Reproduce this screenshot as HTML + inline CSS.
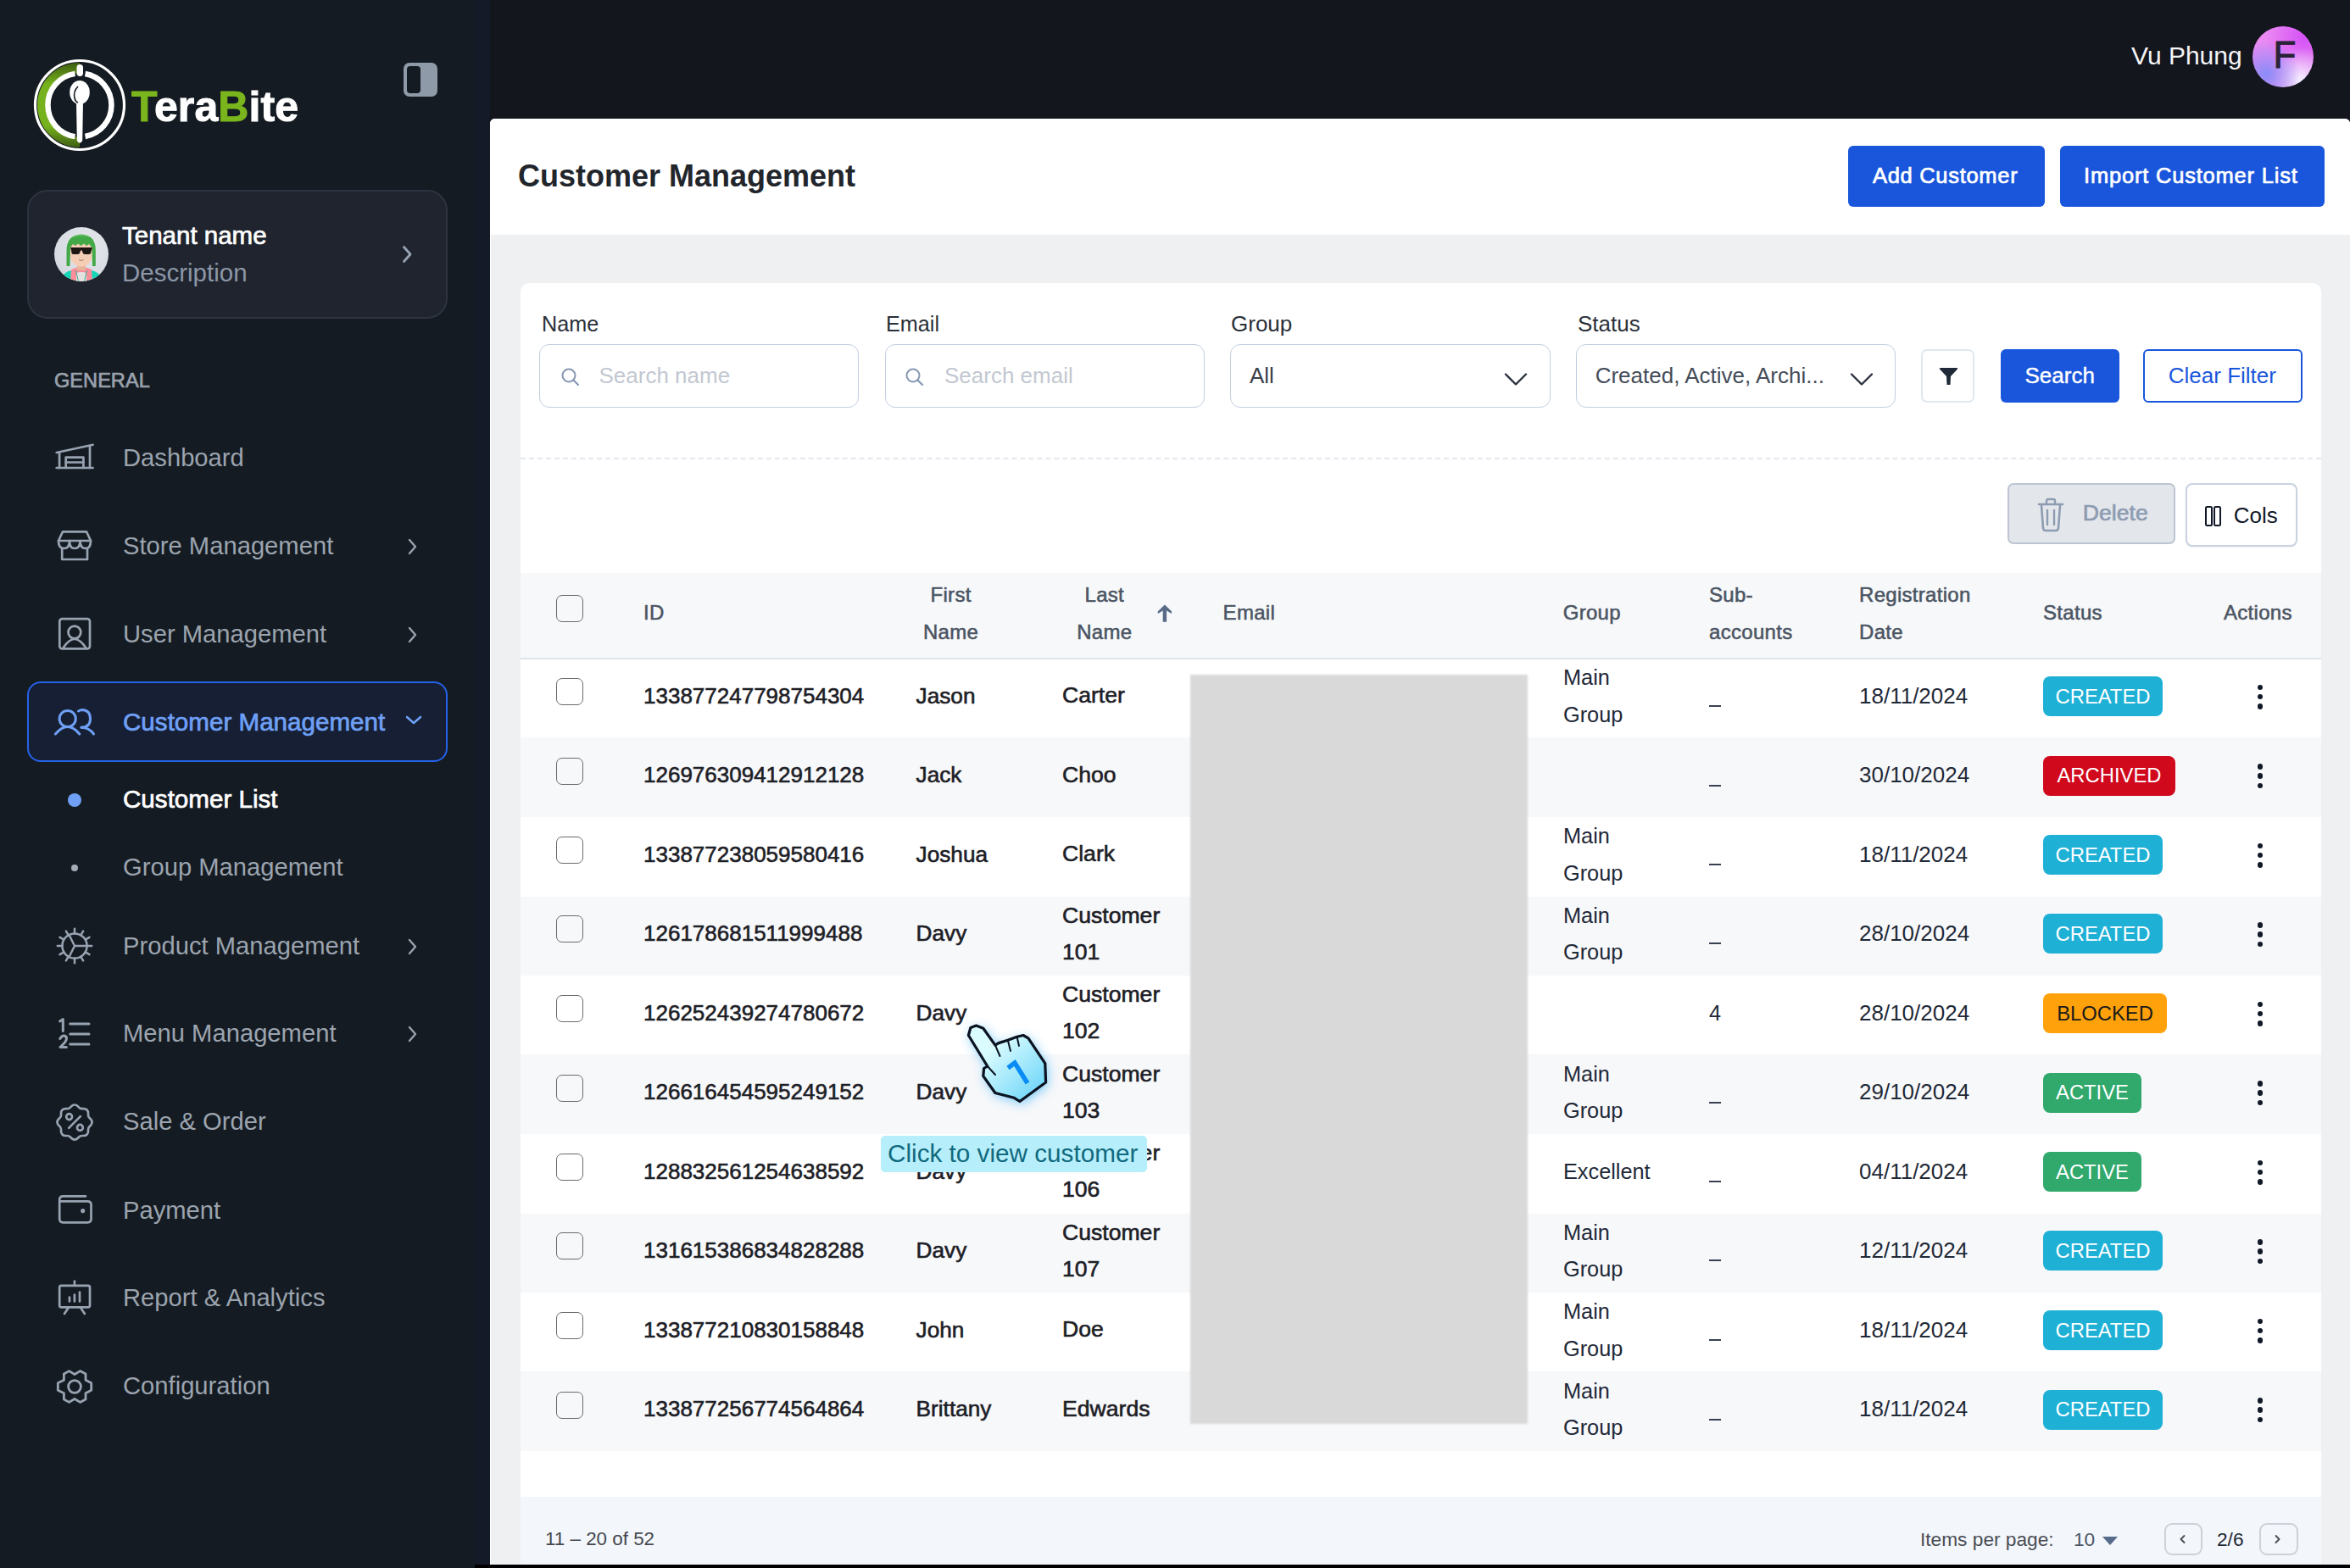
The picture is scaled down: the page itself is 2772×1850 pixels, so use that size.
<!DOCTYPE html><html><head><meta charset="utf-8"><style>
html,body{margin:0;padding:0;width:2772px;height:1850px;overflow:hidden;background:#14161e;font-family:"Liberation Sans", sans-serif;}
.t{position:absolute;white-space:nowrap;font-family:"Liberation Sans", sans-serif;}
</style></head><body><div style="position:absolute;left:0px;top:0px;width:560px;height:1850px;background:#151b22"></div>
<div style="position:absolute;left:560px;top:0px;width:18px;height:1850px;background:#151a28"></div>
<div style="position:absolute;left:578px;top:0px;width:2194px;height:140px;background:#14161e"></div>
<div style="position:absolute;left:578px;top:140px;width:2194px;height:1706px;background:#eff0f2;border-top-left-radius:6px;border-top-right-radius:6px;box-shadow:inset 1px 0 0 #fff;"></div>
<div style="position:absolute;left:578px;top:140px;width:2194px;height:137px;background:#ffffff;border-top-left-radius:6px;border-top-right-radius:6px;"></div>
<div style="position:absolute;left:614px;top:334px;width:2124px;height:1512px;background:#ffffff;border-top-left-radius:10px;border-top-right-radius:10px;"></div>
<div style="position:absolute;left:614px;top:1766px;width:2124px;height:80px;background:#f3f6fa"></div>
<div style="position:absolute;left:560px;top:1846px;width:2212px;height:4px;background:#000"></div>
<svg style="position:absolute;left:36px;top:66px" width="116" height="116" viewBox="0 0 116 116" fill="none">
<defs><linearGradient id="gg" x1="0" y1="0" x2="0" y2="1"><stop offset="0" stop-color="#3f5e12"/><stop offset="0.25" stop-color="#76b11e"/><stop offset="0.75" stop-color="#76b11e"/><stop offset="1" stop-color="#3f5e12"/></linearGradient></defs>
<circle cx="58" cy="58" r="52.5" stroke="#fff" stroke-width="3.2"/>
<path d="M58 8 A50 50 0 0 0 58 108 L58 96 A38 38 0 0 1 58 20 Z" fill="url(#gg)"/>
<path d="M52.5 20.9 A37.5 37.5 0 0 0 52.5 95.1" stroke="#fff" stroke-width="6.5"/>
<path d="M64.5 21.07 A37.5 37.5 0 0 1 64.5 94.93" stroke="#fff" stroke-width="6.5"/>
<rect x="54.5" y="10" width="7.5" height="14" rx="3.7" fill="#fff"/>
<ellipse cx="58" cy="43" rx="11.8" ry="14" fill="#fff"/>
<path d="M54 54 L54.8 100 Q58 105.5 61.2 100 L62 54 Z" fill="#fff"/>
<path d="M56 36 Q50 42 52 50 Q53 54 56 55" stroke="#151b22" stroke-width="1.6"/>
</svg>
<div class="t" style="left:155px;top:100.5px;font-size:50px;line-height:50px;color:#fff;font-weight:700;letter-spacing:0.1px;-webkit-text-stroke:1px #fff;"><span style="color:#7ab51d;-webkit-text-stroke:1px #7ab51d">T</span>era<span style="color:#7ab51d;-webkit-text-stroke:1px #7ab51d">B</span>ite</div>
<div style="position:absolute;left:476px;top:74px;width:40px;height:40px;box-sizing:border-box;background:#8f9aa8;border-radius:7px;"></div>
<div style="position:absolute;left:480px;top:78px;width:16px;height:32px;background:#151b22;border-radius:4px;"></div>
<div style="position:absolute;left:32px;top:224px;width:496px;height:152px;box-sizing:border-box;background:#1f242f;border:2px solid #2e343f;border-radius:24px;"></div>
<div style="position:absolute;left:64px;top:268px;width:64px;height:64px;border-radius:50%;background:radial-gradient(circle at 60% 35%, #e4e7ec 0%, #d9dde3 60%, #c9ced6 100%);overflow:hidden">
<svg width="64" height="64" viewBox="0 0 64 64">
<path d="M6 64 Q10 53 20 51 L44 51 Q54 53 58 64 Z" fill="#12d8b8"/>
<path d="M19 64 L20 50 Q26 47 32 47 Q38 47 44 50 L45 64 Z" fill="#fb8d9a"/>
<path d="M26 64 L26 54 Q32 52 38 54 L38 64 Z" fill="#e6e2e2"/>
<path d="M25.5 51 L28.5 64 M38.5 51 L35.5 64" stroke="#2fae8e" stroke-width="1"/>
<rect x="27" y="42" width="10" height="9" fill="#e8b49c"/>
<ellipse cx="31.8" cy="32.5" rx="13" ry="14" fill="#f5cdb5"/><rect x="18.5" y="18" width="26.5" height="12" fill="#f5cdb5"/>
<path d="M14.5 46 L14.5 28 Q14.5 9 32 8.5 Q49 9 48.8 28 L48.8 46 L45 46 L44.5 24 L41 20 L38 22 L35 19.5 L31.5 22 L28 19.5 L25 22 L22 20 L19 24 L18.5 46 Z" fill="#43a947"/>
<path d="M20 12.5 Q32 6 44 12.5 Q38 10 32 10 Q26 10 20 12.5 Z" fill="#7fcf72"/>
<path d="M19 24 L45 24 L44 27 L43 31 Q42.5 32 40.5 32 L36 32 Q34 32 33.5 30 L32.8 27.5 L31 27.5 L30.3 30 Q29.8 32 27.8 32 L23 32 Q21 32 20.6 31 L20 27 Z" fill="#1d1612"/>
<path d="M29 38.5 Q31.8 40.5 34.6 38.5" stroke="#8a6f66" stroke-width="0.9" fill="none"/>
</svg></div>
<div class="t" style="left:144px;top:262.9px;font-size:29.5px;line-height:29.5px;color:#ffffff;font-weight:400;-webkit-text-stroke:0.7px #ffffff;">Tenant name</div>
<div class="t" style="left:144px;top:306.9px;font-size:29.5px;line-height:29.5px;color:#8d97a6;font-weight:400;">Description</div>
<svg style="position:absolute;left:472px;top:288px" width="16" height="24" viewBox="0 0 16 24" fill="none"><path d="M4.5 3.5 L12 12 L4.5 20.5" stroke="#98a3b2" stroke-width="2.8" stroke-linecap="round" stroke-linejoin="round"/></svg>
<div class="t" style="left:64px;top:437.9px;font-size:23.6px;line-height:23.6px;color:#9aa2ad;font-weight:400;-webkit-text-stroke:0.7px #9aa2ad;">GENERAL</div>
<div class="t" style="left:145px;top:526.2px;font-size:29.2px;line-height:29.2px;color:#9ba4af;font-weight:400;">Dashboard</div>
<div class="t" style="left:145px;top:629.7px;font-size:29.2px;line-height:29.2px;color:#9ba4af;font-weight:400;">Store Management</div>
<svg style="position:absolute;left:478px;top:632.5px" width="16" height="24" viewBox="0 0 16 24" fill="none"><path d="M5 4 L12 12 L5 20" stroke="#9aa2ad" stroke-width="2.4" stroke-linecap="round" stroke-linejoin="round"/></svg>
<div class="t" style="left:145px;top:733.7px;font-size:29.2px;line-height:29.2px;color:#9ba4af;font-weight:400;">User Management</div>
<svg style="position:absolute;left:478px;top:736.5px" width="16" height="24" viewBox="0 0 16 24" fill="none"><path d="M5 4 L12 12 L5 20" stroke="#9aa2ad" stroke-width="2.4" stroke-linecap="round" stroke-linejoin="round"/></svg>
<div class="t" style="left:145px;top:1101.7px;font-size:29.2px;line-height:29.2px;color:#9ba4af;font-weight:400;">Product Management</div>
<svg style="position:absolute;left:478px;top:1104.5px" width="16" height="24" viewBox="0 0 16 24" fill="none"><path d="M5 4 L12 12 L5 20" stroke="#9aa2ad" stroke-width="2.4" stroke-linecap="round" stroke-linejoin="round"/></svg>
<div class="t" style="left:145px;top:1205.2px;font-size:29.2px;line-height:29.2px;color:#9ba4af;font-weight:400;">Menu Management</div>
<svg style="position:absolute;left:478px;top:1208px" width="16" height="24" viewBox="0 0 16 24" fill="none"><path d="M5 4 L12 12 L5 20" stroke="#9aa2ad" stroke-width="2.4" stroke-linecap="round" stroke-linejoin="round"/></svg>
<div class="t" style="left:145px;top:1309.2px;font-size:29.2px;line-height:29.2px;color:#9ba4af;font-weight:400;">Sale &amp; Order</div>
<div class="t" style="left:145px;top:1414.2px;font-size:29.2px;line-height:29.2px;color:#9ba4af;font-weight:400;">Payment</div>
<div class="t" style="left:145px;top:1517.2px;font-size:29.2px;line-height:29.2px;color:#9ba4af;font-weight:400;">Report &amp; Analytics</div>
<div class="t" style="left:145px;top:1621.2px;font-size:29.2px;line-height:29.2px;color:#9ba4af;font-weight:400;">Configuration</div>
<div style="position:absolute;left:32px;top:804px;width:496px;height:95px;box-sizing:border-box;background:#161f33;border:2.5px solid #2563eb;border-radius:16px;"></div>
<div class="t" style="left:145px;top:836.8px;font-size:29.6px;line-height:29.6px;color:#6fa0f6;font-weight:400;-webkit-text-stroke:0.7px #6fa0f6;">Customer Management</div>
<svg style="position:absolute;left:476px;top:842px" width="24" height="16" viewBox="0 0 24 16" fill="none"><path d="M4 4 L12 11 L20 4" stroke="#6fa0f6" stroke-width="2.6" stroke-linecap="round" stroke-linejoin="round"/></svg>
<div style="position:absolute;left:80px;top:936px;width:16px;height:16px;background:#6fa0f6;border-radius:50%"></div>
<div class="t" style="left:145px;top:928.4px;font-size:29.6px;line-height:29.6px;color:#ffffff;font-weight:400;-webkit-text-stroke:0.7px #ffffff;">Customer List</div>
<div style="position:absolute;left:84px;top:1020px;width:8px;height:8px;background:#a3abb6;border-radius:50%"></div>
<div class="t" style="left:145px;top:1009.2px;font-size:29.2px;line-height:29.2px;color:#9ba4af;font-weight:400;">Group Management</div>
<div class="t" style="left:2514px;top:50.5px;font-size:30px;line-height:30px;color:#f4f4f6;font-weight:400;">Vu Phung</div>
<div style="position:absolute;left:2657px;top:31px;width:72px;height:72px;border-radius:50%;background:radial-gradient(circle at 22% 78%, #8a8cf8 0%, rgba(138,140,248,0) 50%), radial-gradient(circle at 78% 88%, #f2efff 0%, rgba(242,239,255,0) 45%), radial-gradient(circle at 85% 18%, #d552f7 0%, rgba(213,82,247,0) 55%), #ec8af2;"></div>
<div class="t" style="left:2195px;width:1000px;text-align:center;top:42.6px;font-size:44px;line-height:44px;color:#2a2236;font-weight:400;-webkit-text-stroke:0.9px #2a2236;">F</div>
<svg style="position:absolute;left:0;top:0" width="560" height="1850" viewBox="0 0 560 1850" fill="none" stroke="#98a3b2" stroke-width="2.7" stroke-linecap="round" stroke-linejoin="round"><path d="M66.7 534 L109.6 524.8"/><path d="M70.1 534 L70.1 552 M106 527 L106 552"/><path d="M66.7 552 L109.6 552"/><path d="M77.7 552 L77.7 539.6 L98.4 539.6 L98.4 552"/><path d="M77.7 545.5 L98.4 545.5"/></svg>
<svg style="position:absolute;left:0;top:0" width="560" height="1850" viewBox="0 0 560 1850" fill="none" stroke="#98a3b2" stroke-width="2.7" stroke-linecap="round" stroke-linejoin="round"><path d="M73.2 647 L73.2 660 L103 660 L103 647"/><path d="M74 627.3 L102 627.3 L107 638 L69 638 Z"/><path d="M69 638 Q69 647 75.5 647 Q82 647 82 638 Q82 647 88 647 Q94.5 647 94.5 638 Q94.5 647 101 647 Q107 647 107 638"/></svg>
<svg style="position:absolute;left:0;top:0" width="560" height="1850" viewBox="0 0 560 1850" fill="none" stroke="#98a3b2" stroke-width="2.7" stroke-linecap="round" stroke-linejoin="round"><rect x="70.3" y="730.2" width="35.7" height="35.2" rx="3"/><circle cx="87.9" cy="746" r="7.4"/><path d="M74.9 764 Q87.9 744 101 764"/></svg>
<svg style="position:absolute;left:0;top:0" width="560" height="1850" viewBox="0 0 560 1850" fill="none" stroke="#98a3b2" stroke-width="2.5" stroke-linecap="round" stroke-linejoin="round"><circle cx="88" cy="1116" r="14.6"/><path d="M88.00 1101.40 L88.00 1095.80"/><path d="M95.30 1103.36 L98.10 1098.51"/><path d="M100.64 1108.70 L105.49 1105.90"/><path d="M102.60 1116.00 L108.20 1116.00"/><path d="M100.64 1123.30 L105.49 1126.10"/><path d="M95.30 1128.64 L98.10 1133.49"/><path d="M88.00 1130.60 L88.00 1136.20"/><path d="M80.70 1128.64 L77.90 1133.49"/><path d="M75.36 1123.30 L70.51 1126.10"/><path d="M73.40 1116.00 L67.80 1116.00"/><path d="M75.36 1108.70 L70.51 1105.90"/><path d="M80.70 1103.36 L77.90 1098.51"/><path d="M81.5 1103 L88 1116 L102.6 1116 M88 1116 L81.5 1129"/></svg>
<svg style="position:absolute;left:0;top:0" width="560" height="1850" viewBox="0 0 560 1850" fill="none" stroke="#98a3b2" stroke-width="3" stroke-linecap="round" stroke-linejoin="round"><path d="M70.6 1205 L74.3 1202.5 L74.3 1216.5"/><path d="M70.8 1225.5 Q73 1222 75 1222 Q78.5 1222 78.5 1225.5 Q78.5 1227.5 76 1230.5 L71 1235.5 L78.3 1235.5"/><path d="M82.7 1207.9 L105 1207.9 M82.7 1219.9 L105 1219.9 M82.7 1232 L105 1232"/></svg>
<svg style="position:absolute;left:0;top:0" width="560" height="1850" viewBox="0 0 560 1850" fill="none" stroke="#98a3b2" stroke-width="2.7" stroke-linecap="round" stroke-linejoin="round"><g transform="translate(88,1324) scale(2.28) translate(-12,-12)" stroke-width="1.18"><path d="M5 7.2a2.2 2.2 0 0 1 2.2 -2.2h1a2.2 2.2 0 0 0 1.55 -.64l.7 -.7a2.2 2.2 0 0 1 3.12 0l.7 .7c.412 .41 .97 .64 1.55 .64h1a2.2 2.2 0 0 1 2.2 2.2v1c0 .58 .23 1.138 .64 1.55l.7 .7a2.2 2.2 0 0 1 0 3.12l-.7 .7a2.2 2.2 0 0 0 -.64 1.55v1a2.2 2.2 0 0 1 -2.2 2.2h-1a2.2 2.2 0 0 0 -1.55 .64l-.7 .7a2.2 2.2 0 0 1 -3.12 0l-.7 -.7a2.2 2.2 0 0 0 -1.55 -.64h-1a2.2 2.2 0 0 1 -2.2 -2.2v-1a2.2 2.2 0 0 0 -.64 -1.55l-.7 -.7a2.2 2.2 0 0 1 0 -3.12l.7 -.7a2.2 2.2 0 0 0 .64 -1.55v-1" /><path d="M9 15 L15 9"/><circle cx="9.2" cy="9.2" r="1.5"/><circle cx="14.8" cy="14.8" r="1.5"/></g></svg>
<svg style="position:absolute;left:0;top:0" width="560" height="1850" viewBox="0 0 560 1850" fill="none" stroke="#98a3b2" stroke-width="2.7" stroke-linecap="round" stroke-linejoin="round"><path d="M101 1411.3 L74.5 1411.3 Q70.2 1411.3 70.2 1415.5 L70.2 1438 Q70.2 1442.3 74.5 1442.3 L103.3 1442.3 Q107.5 1442.3 107.5 1438 L107.5 1421.5 Q107.5 1417.3 103.3 1417.3 L70.2 1417.3"/><circle cx="97.7" cy="1428.6" r="1.2" fill="#9aa2ad"/></svg>
<svg style="position:absolute;left:0;top:0" width="560" height="1850" viewBox="0 0 560 1850" fill="none" stroke="#98a3b2" stroke-width="2.7" stroke-linecap="round" stroke-linejoin="round"><path d="M87.9 1511.7 L87.9 1516.5"/><rect x="70.2" y="1516.8" width="35.8" height="25.5" rx="2"/><path d="M82 1530.5 L82 1535.5 M87.9 1527.5 L87.9 1535.5 M94 1524.5 L94 1535.5"/><path d="M81 1542.5 L76 1550 M94.8 1542.5 L99.9 1550"/></svg>
<svg style="position:absolute;left:0;top:0" width="560" height="1850" viewBox="0 0 560 1850" fill="none" stroke="#98a3b2" stroke-width="2.8" stroke-linecap="round" stroke-linejoin="round"><path d="M88.0 1621.5 L94.5 1617.6 L101.0 1621.0 L101.0 1628.3 L107.7 1631.8 L107.7 1640.2 L101.0 1643.7 L101.0 1651.0 L94.5 1654.4 L88.0 1650.5 L81.5 1654.4 L75.4 1651.0 L75.4 1643.7 L68.3 1640.2 L68.3 1631.8 L75.4 1628.3 L75.4 1621.0 L81.5 1617.6 Z"/><circle cx="88" cy="1636" r="7.4"/></svg>
<svg style="position:absolute;left:0;top:0" width="560" height="1850" viewBox="0 0 560 1850" fill="none" stroke="#6fa0f6" stroke-width="3" stroke-linecap="round" stroke-linejoin="round"><circle cx="79.7" cy="848" r="9.6"/><path d="M65.4 866 Q79.7 849 93.8 866"/><path d="M92.5 839 Q95 837.5 97 837.5 Q106.5 838 106.5 848 Q106.5 858 96 858.3"/><path d="M96 858.3 Q105 858.5 110.5 866"/></svg>
<div class="t" style="left:611px;top:190.4px;font-size:36px;line-height:36px;color:#22262c;font-weight:700;">Customer Management</div>
<div style="position:absolute;left:2180px;top:172px;width:232px;height:72px;box-sizing:border-box;background:#1a56db;border-radius:6px;"></div>
<div class="t" style="left:2209px;top:194.8px;font-size:25.5px;line-height:25.5px;color:#fff;font-weight:400;-webkit-text-stroke:0.7px #fff;letter-spacing:0.7px;">Add Customer</div>
<div style="position:absolute;left:2430px;top:172px;width:312px;height:72px;box-sizing:border-box;background:#1a56db;border-radius:6px;"></div>
<div class="t" style="left:2458px;top:194.8px;font-size:25.5px;line-height:25.5px;color:#fff;font-weight:400;-webkit-text-stroke:0.7px #fff;letter-spacing:0.8px;">Import Customer List</div>
<div class="t" style="left:639px;top:369.6px;font-size:25.2px;line-height:25.2px;color:#2a3038;font-weight:400;">Name</div>
<div class="t" style="left:1045px;top:369.6px;font-size:25.2px;line-height:25.2px;color:#2a3038;font-weight:400;">Email</div>
<div class="t" style="left:1452px;top:368.9px;font-size:26px;line-height:26px;color:#2a3038;font-weight:400;">Group</div>
<div class="t" style="left:1861px;top:368.9px;font-size:26px;line-height:26px;color:#2a3038;font-weight:400;">Status</div>
<div style="position:absolute;left:636px;top:406px;width:377px;height:75px;box-sizing:border-box;background:#fff;border:1.7px solid #c3cee0;border-radius:12px;"></div>
<div style="position:absolute;left:1044px;top:406px;width:377px;height:75px;box-sizing:border-box;background:#fff;border:1.7px solid #c3cee0;border-radius:12px;"></div>
<div style="position:absolute;left:1451px;top:406px;width:378px;height:75px;box-sizing:border-box;background:#fff;border:1.7px solid #c3cee0;border-radius:12px;"></div>
<div style="position:absolute;left:1859px;top:406px;width:377px;height:75px;box-sizing:border-box;background:#fff;border:1.7px solid #c3cee0;border-radius:12px;"></div>
<svg style="position:absolute;left:660px;top:432px" width="26" height="26" viewBox="0 0 26 26" fill="none"><circle cx="11" cy="11" r="7.5" stroke="#8797b3" stroke-width="2"/><path d="M16.5 16.5 L22 22" stroke="#8797b3" stroke-width="2.2" stroke-linecap="round"/></svg>
<svg style="position:absolute;left:1066px;top:432px" width="26" height="26" viewBox="0 0 26 26" fill="none"><circle cx="11" cy="11" r="7.5" stroke="#8797b3" stroke-width="2"/><path d="M16.5 16.5 L22 22" stroke="#8797b3" stroke-width="2.2" stroke-linecap="round"/></svg>
<div class="t" style="left:706.5px;top:429.9px;font-size:26px;line-height:26px;color:#c2c8d1;font-weight:400;">Search name</div>
<div class="t" style="left:1114px;top:429.9px;font-size:26px;line-height:26px;color:#c2c8d1;font-weight:400;">Search email</div>
<div class="t" style="left:1474px;top:430.4px;font-size:26px;line-height:26px;color:#3a404c;font-weight:400;">All</div>
<div class="t" style="left:1881.7px;top:430.4px;font-size:26px;line-height:26px;color:#454c58;font-weight:400;">Created, Active, Archi...</div>
<svg style="position:absolute;left:1773px;top:438px" width="30" height="20" viewBox="0 0 30 20" fill="none"><path d="M3 3.5 L15 15.5 L27 3.5" stroke="#2b3240" stroke-width="2.4" stroke-linecap="round" stroke-linejoin="round"/></svg>
<svg style="position:absolute;left:2181px;top:438px" width="30" height="20" viewBox="0 0 30 20" fill="none"><path d="M3 3.5 L15 15.5 L27 3.5" stroke="#2b3240" stroke-width="2.4" stroke-linecap="round" stroke-linejoin="round"/></svg>
<div style="position:absolute;left:2266px;top:412px;width:63px;height:63px;box-sizing:border-box;background:#fff;border:2px solid #e1e7ef;border-radius:7px;"></div>
<svg style="position:absolute;left:2284px;top:430px" width="28" height="28" viewBox="0 0 28 28" fill="none"><path d="M4 5.5 Q3 4 5 4 L24 4 Q26 4 25 5.5 L17 14 L16.5 24 L12.5 24 L12 14 Z" fill="#1f2937"/></svg>
<div style="position:absolute;left:2360px;top:412px;width:140px;height:63px;box-sizing:border-box;background:#1a56db;border-radius:6px;"></div>
<div class="t" style="left:2388.5px;top:430.4px;font-size:26px;line-height:26px;color:#fff;font-weight:400;-webkit-text-stroke:0.4px #fff;">Search</div>
<div style="position:absolute;left:2528px;top:412px;width:188px;height:63px;box-sizing:border-box;background:#fff;border-radius:6px;border:2px solid #1a56db;"></div>
<div class="t" style="left:2557.8px;top:430.4px;font-size:26px;line-height:26px;color:#1a56db;font-weight:400;">Clear Filter</div>
<div style="position:absolute;left:614px;top:540px;width:2124px;height:0;border-top:2px dashed #e3e7ee"></div>
<div style="position:absolute;left:2368px;top:570px;width:198px;height:72px;box-sizing:border-box;background:#e3e6eb;border:2px solid #bcc5d1;border-radius:7px;"></div>
<svg style="position:absolute;left:2401px;top:586px" width="36" height="42" viewBox="0 0 36 42" fill="none"><path d="M4 9 L32 9" stroke="#8d9cb1" stroke-width="2.6" stroke-linecap="round"/><path d="M13 9 L13 5 Q13 3 15 3 L21 3 Q23 3 23 5 L23 9" stroke="#8d9cb1" stroke-width="2.4"/><path d="M7 10 L9 37 Q9.5 40 12 40 L24 40 Q26.5 40 27 37 L29 10" stroke="#8d9cb1" stroke-width="2.6"/><path d="M14 16 L14 33 M22 16 L22 33" stroke="#8d9cb1" stroke-width="2.4" stroke-linecap="round"/></svg>
<div class="t" style="left:2456.8px;top:592.1px;font-size:26.6px;line-height:26.6px;color:#8d9cb1;font-weight:400;-webkit-text-stroke:0.7px #8d9cb1;">Delete</div>
<div style="position:absolute;left:2578px;top:570px;width:132px;height:75px;box-sizing:border-box;background:#fff;border:2px solid #c9d3e0;border-radius:8px;box-shadow:0 1px 2px rgba(0,0,0,0.06)"></div>
<svg style="position:absolute;left:2600px;top:596px" width="22" height="26" viewBox="0 0 22 26" fill="none"><rect x="2" y="2" width="7" height="22" rx="1.5" stroke="#111827" stroke-width="2"/><rect x="12" y="2" width="7" height="22" rx="1.5" stroke="#111827" stroke-width="2"/></svg>
<div class="t" style="left:2634.8px;top:594.9px;font-size:26px;line-height:26px;color:#111827;font-weight:400;">Cols</div>
<div style="position:absolute;left:614px;top:676px;width:2124px;height:101px;background:#f7f8fa"></div>
<div style="position:absolute;left:614px;top:776px;width:2124px;height:2px;background:#dde4ee"></div>
<div style="position:absolute;left:656px;top:702px;width:32px;height:32px;box-sizing:border-box;border:1.6px solid #6a6a6a;border-radius:7px;"></div>
<div class="t" style="left:759px;top:711.1px;font-size:24px;line-height:24px;color:#4b5563;font-weight:400;-webkit-text-stroke:0.55px #4b5563;letter-spacing:0.3px;">ID</div>
<div class="t" style="left:621.5999999999999px;width:1000px;text-align:center;top:689.6px;font-size:24px;line-height:24px;color:#4b5563;font-weight:400;-webkit-text-stroke:0.55px #4b5563;letter-spacing:0.3px;">First</div>
<div class="t" style="left:621.5999999999999px;width:1000px;text-align:center;top:734.1px;font-size:24px;line-height:24px;color:#4b5563;font-weight:400;-webkit-text-stroke:0.55px #4b5563;letter-spacing:0.3px;">Name</div>
<div class="t" style="left:802.8px;width:1000px;text-align:center;top:689.6px;font-size:24px;line-height:24px;color:#4b5563;font-weight:400;-webkit-text-stroke:0.55px #4b5563;letter-spacing:0.3px;">Last</div>
<div class="t" style="left:802.8px;width:1000px;text-align:center;top:734.1px;font-size:24px;line-height:24px;color:#4b5563;font-weight:400;-webkit-text-stroke:0.55px #4b5563;letter-spacing:0.3px;">Name</div>
<svg style="position:absolute;left:1360px;top:710px" width="30" height="30" viewBox="1360 710 30 30"><path d="M1373.9 713.5 L1382 721.2 L1382 724 L1376.1 720.5 L1376.1 733.8 L1371.7 733.8 L1371.7 720.5 L1365.8 724 L1365.8 721.2 Z" fill="#5a6b87"/></svg>
<div class="t" style="left:1442.6px;top:711.1px;font-size:24px;line-height:24px;color:#4b5563;font-weight:400;-webkit-text-stroke:0.55px #4b5563;letter-spacing:0.3px;">Email</div>
<div class="t" style="left:1843.7px;top:711.1px;font-size:24px;line-height:24px;color:#4b5563;font-weight:400;-webkit-text-stroke:0.55px #4b5563;letter-spacing:0.3px;">Group</div>
<div class="t" style="left:2016px;top:689.6px;font-size:24px;line-height:24px;color:#4b5563;font-weight:400;-webkit-text-stroke:0.55px #4b5563;letter-spacing:0.3px;">Sub-</div>
<div class="t" style="left:2016px;top:734.1px;font-size:24px;line-height:24px;color:#4b5563;font-weight:400;-webkit-text-stroke:0.55px #4b5563;letter-spacing:0.3px;">accounts</div>
<div class="t" style="left:2193px;top:689.6px;font-size:24px;line-height:24px;color:#4b5563;font-weight:400;-webkit-text-stroke:0.55px #4b5563;letter-spacing:0.3px;">Registration</div>
<div class="t" style="left:2193px;top:734.1px;font-size:24px;line-height:24px;color:#4b5563;font-weight:400;-webkit-text-stroke:0.55px #4b5563;letter-spacing:0.3px;">Date</div>
<div class="t" style="left:2410px;top:711.1px;font-size:24px;line-height:24px;color:#4b5563;font-weight:400;-webkit-text-stroke:0.55px #4b5563;letter-spacing:0.3px;">Status</div>
<div class="t" style="left:2623px;top:711.1px;font-size:24px;line-height:24px;color:#4b5563;font-weight:400;-webkit-text-stroke:0.55px #4b5563;letter-spacing:0.3px;">Actions</div>
<div style="position:absolute;left:656px;top:800px;width:32px;height:32px;box-sizing:border-box;border:1.6px solid #6a6a6a;border-radius:7px;"></div>
<div class="t" style="left:759px;top:807.9px;font-size:26px;line-height:26px;color:#1d2026;font-weight:400;-webkit-text-stroke:0.6px #1d2026;">133877247798754304</div>
<div class="t" style="left:1080.6px;top:807.7px;font-size:26.2px;line-height:26.2px;color:#1d2026;font-weight:400;-webkit-text-stroke:0.6px #1d2026;">Jason</div>
<div class="t" style="left:1253px;top:807.4px;font-size:26.6px;line-height:26.6px;color:#1d2026;font-weight:400;-webkit-text-stroke:0.6px #1d2026;">Carter</div>
<div class="t" style="left:1844px;top:787.1px;font-size:25.3px;line-height:25.3px;color:#1f2937;font-weight:400;">Main</div>
<div class="t" style="left:1844px;top:830.5px;font-size:25.3px;line-height:25.3px;color:#1f2937;font-weight:400;">Group</div>
<div style="position:absolute;left:2016px;top:832px;width:14px;height:2px;background:#374151"></div>
<div class="t" style="left:2193px;top:807.9px;font-size:26px;line-height:26px;color:#1f2937;font-weight:400;">18/11/2024</div>
<div style="position:absolute;left:2410px;top:798px;width:141px;height:47px;background:#1fb0d6;border-radius:8px"></div>
<div class="t" style="left:1980.5px;width:1000px;text-align:center;top:809.8px;font-size:23.8px;line-height:23.8px;color:#fff;font-weight:400;">CREATED</div>
<div style="position:absolute;left:2662.5px;top:807.8px;width:6.6px;height:6.6px;background:#111827;border-radius:50%"></div>
<div style="position:absolute;left:2662.5px;top:818.9px;width:6.6px;height:6.6px;background:#111827;border-radius:50%"></div>
<div style="position:absolute;left:2662.5px;top:830.0px;width:6.6px;height:6.6px;background:#111827;border-radius:50%"></div>
<div style="position:absolute;left:614px;top:870px;width:2124px;height:94px;background:#f7f8fa"></div>
<div style="position:absolute;left:656px;top:894px;width:32px;height:32px;box-sizing:border-box;border:1.6px solid #6a6a6a;border-radius:7px;"></div>
<div class="t" style="left:759px;top:901.4px;font-size:26px;line-height:26px;color:#1d2026;font-weight:400;-webkit-text-stroke:0.6px #1d2026;">126976309412912128</div>
<div class="t" style="left:1080.6px;top:901.2px;font-size:26.2px;line-height:26.2px;color:#1d2026;font-weight:400;-webkit-text-stroke:0.6px #1d2026;">Jack</div>
<div class="t" style="left:1253px;top:900.9px;font-size:26.6px;line-height:26.6px;color:#1d2026;font-weight:400;-webkit-text-stroke:0.6px #1d2026;">Choo</div>
<div style="position:absolute;left:2016px;top:926px;width:14px;height:2px;background:#374151"></div>
<div class="t" style="left:2193px;top:901.4px;font-size:26px;line-height:26px;color:#1f2937;font-weight:400;">30/10/2024</div>
<div style="position:absolute;left:2410px;top:892px;width:156px;height:47px;background:#d0091d;border-radius:8px"></div>
<div class="t" style="left:1988.0px;width:1000px;text-align:center;top:903.3px;font-size:23.8px;line-height:23.8px;color:#fff;font-weight:400;">ARCHIVED</div>
<div style="position:absolute;left:2662.5px;top:901.3px;width:6.6px;height:6.6px;background:#111827;border-radius:50%"></div>
<div style="position:absolute;left:2662.5px;top:912.4px;width:6.6px;height:6.6px;background:#111827;border-radius:50%"></div>
<div style="position:absolute;left:2662.5px;top:923.5px;width:6.6px;height:6.6px;background:#111827;border-radius:50%"></div>
<div style="position:absolute;left:656px;top:987px;width:32px;height:32px;box-sizing:border-box;border:1.6px solid #6a6a6a;border-radius:7px;"></div>
<div class="t" style="left:759px;top:994.9px;font-size:26px;line-height:26px;color:#1d2026;font-weight:400;-webkit-text-stroke:0.6px #1d2026;">133877238059580416</div>
<div class="t" style="left:1080.6px;top:994.7px;font-size:26.2px;line-height:26.2px;color:#1d2026;font-weight:400;-webkit-text-stroke:0.6px #1d2026;">Joshua</div>
<div class="t" style="left:1253px;top:994.4px;font-size:26.6px;line-height:26.6px;color:#1d2026;font-weight:400;-webkit-text-stroke:0.6px #1d2026;">Clark</div>
<div class="t" style="left:1844px;top:974.1px;font-size:25.3px;line-height:25.3px;color:#1f2937;font-weight:400;">Main</div>
<div class="t" style="left:1844px;top:1017.5px;font-size:25.3px;line-height:25.3px;color:#1f2937;font-weight:400;">Group</div>
<div style="position:absolute;left:2016px;top:1019px;width:14px;height:2px;background:#374151"></div>
<div class="t" style="left:2193px;top:994.9px;font-size:26px;line-height:26px;color:#1f2937;font-weight:400;">18/11/2024</div>
<div style="position:absolute;left:2410px;top:985px;width:141px;height:47px;background:#1fb0d6;border-radius:8px"></div>
<div class="t" style="left:1980.5px;width:1000px;text-align:center;top:996.8px;font-size:23.8px;line-height:23.8px;color:#fff;font-weight:400;">CREATED</div>
<div style="position:absolute;left:2662.5px;top:994.8px;width:6.6px;height:6.6px;background:#111827;border-radius:50%"></div>
<div style="position:absolute;left:2662.5px;top:1005.9px;width:6.6px;height:6.6px;background:#111827;border-radius:50%"></div>
<div style="position:absolute;left:2662.5px;top:1017.0px;width:6.6px;height:6.6px;background:#111827;border-radius:50%"></div>
<div style="position:absolute;left:614px;top:1058px;width:2124px;height:93px;background:#f7f8fa"></div>
<div style="position:absolute;left:656px;top:1080px;width:32px;height:32px;box-sizing:border-box;border:1.6px solid #6a6a6a;border-radius:7px;"></div>
<div class="t" style="left:759px;top:1088.4px;font-size:26px;line-height:26px;color:#1d2026;font-weight:400;-webkit-text-stroke:0.6px #1d2026;">126178681511999488</div>
<div class="t" style="left:1080.6px;top:1088.2px;font-size:26.2px;line-height:26.2px;color:#1d2026;font-weight:400;-webkit-text-stroke:0.6px #1d2026;">Davy</div>
<div class="t" style="left:1253px;top:1066.5px;font-size:26.6px;line-height:26.6px;color:#1d2026;font-weight:400;-webkit-text-stroke:0.6px #1d2026;">Customer</div>
<div class="t" style="left:1253px;top:1109.9px;font-size:26.6px;line-height:26.6px;color:#1d2026;font-weight:400;-webkit-text-stroke:0.6px #1d2026;">101</div>
<div class="t" style="left:1844px;top:1067.6px;font-size:25.3px;line-height:25.3px;color:#1f2937;font-weight:400;">Main</div>
<div class="t" style="left:1844px;top:1111.0px;font-size:25.3px;line-height:25.3px;color:#1f2937;font-weight:400;">Group</div>
<div style="position:absolute;left:2016px;top:1112px;width:14px;height:2px;background:#374151"></div>
<div class="t" style="left:2193px;top:1088.4px;font-size:26px;line-height:26px;color:#1f2937;font-weight:400;">28/10/2024</div>
<div style="position:absolute;left:2410px;top:1078px;width:141px;height:47px;background:#1fb0d6;border-radius:8px"></div>
<div class="t" style="left:1980.5px;width:1000px;text-align:center;top:1090.3px;font-size:23.8px;line-height:23.8px;color:#fff;font-weight:400;">CREATED</div>
<div style="position:absolute;left:2662.5px;top:1088.3px;width:6.6px;height:6.6px;background:#111827;border-radius:50%"></div>
<div style="position:absolute;left:2662.5px;top:1099.4px;width:6.6px;height:6.6px;background:#111827;border-radius:50%"></div>
<div style="position:absolute;left:2662.5px;top:1110.5px;width:6.6px;height:6.6px;background:#111827;border-radius:50%"></div>
<div style="position:absolute;left:656px;top:1174px;width:32px;height:32px;box-sizing:border-box;border:1.6px solid #6a6a6a;border-radius:7px;"></div>
<div class="t" style="left:759px;top:1181.9px;font-size:26px;line-height:26px;color:#1d2026;font-weight:400;-webkit-text-stroke:0.6px #1d2026;">126252439274780672</div>
<div class="t" style="left:1080.6px;top:1181.7px;font-size:26.2px;line-height:26.2px;color:#1d2026;font-weight:400;-webkit-text-stroke:0.6px #1d2026;">Davy</div>
<div class="t" style="left:1253px;top:1160.0px;font-size:26.6px;line-height:26.6px;color:#1d2026;font-weight:400;-webkit-text-stroke:0.6px #1d2026;">Customer</div>
<div class="t" style="left:1253px;top:1203.4px;font-size:26.6px;line-height:26.6px;color:#1d2026;font-weight:400;-webkit-text-stroke:0.6px #1d2026;">102</div>
<div class="t" style="left:2016px;top:1182.5px;font-size:25.3px;line-height:25.3px;color:#1f2937;font-weight:400;">4</div>
<div class="t" style="left:2193px;top:1181.9px;font-size:26px;line-height:26px;color:#1f2937;font-weight:400;">28/10/2024</div>
<div style="position:absolute;left:2410px;top:1172px;width:146px;height:47px;background:#ffa10a;border-radius:8px"></div>
<div class="t" style="left:1983.0px;width:1000px;text-align:center;top:1183.8px;font-size:23.8px;line-height:23.8px;color:#1a1a1a;font-weight:400;">BLOCKED</div>
<div style="position:absolute;left:2662.5px;top:1181.8px;width:6.6px;height:6.6px;background:#111827;border-radius:50%"></div>
<div style="position:absolute;left:2662.5px;top:1192.9px;width:6.6px;height:6.6px;background:#111827;border-radius:50%"></div>
<div style="position:absolute;left:2662.5px;top:1204.0px;width:6.6px;height:6.6px;background:#111827;border-radius:50%"></div>
<div style="position:absolute;left:614px;top:1244px;width:2124px;height:94px;background:#f7f8fa"></div>
<div style="position:absolute;left:656px;top:1268px;width:32px;height:32px;box-sizing:border-box;border:1.6px solid #6a6a6a;border-radius:7px;"></div>
<div class="t" style="left:759px;top:1275.4px;font-size:26px;line-height:26px;color:#1d2026;font-weight:400;-webkit-text-stroke:0.6px #1d2026;">126616454595249152</div>
<div class="t" style="left:1080.6px;top:1275.2px;font-size:26.2px;line-height:26.2px;color:#1d2026;font-weight:400;-webkit-text-stroke:0.6px #1d2026;">Davy</div>
<div class="t" style="left:1253px;top:1253.5px;font-size:26.6px;line-height:26.6px;color:#1d2026;font-weight:400;-webkit-text-stroke:0.6px #1d2026;">Customer</div>
<div class="t" style="left:1253px;top:1296.9px;font-size:26.6px;line-height:26.6px;color:#1d2026;font-weight:400;-webkit-text-stroke:0.6px #1d2026;">103</div>
<div class="t" style="left:1844px;top:1254.6px;font-size:25.3px;line-height:25.3px;color:#1f2937;font-weight:400;">Main</div>
<div class="t" style="left:1844px;top:1298.0px;font-size:25.3px;line-height:25.3px;color:#1f2937;font-weight:400;">Group</div>
<div style="position:absolute;left:2016px;top:1300px;width:14px;height:2px;background:#374151"></div>
<div class="t" style="left:2193px;top:1275.4px;font-size:26px;line-height:26px;color:#1f2937;font-weight:400;">29/10/2024</div>
<div style="position:absolute;left:2410px;top:1266px;width:116px;height:47px;background:#31a86c;border-radius:8px"></div>
<div class="t" style="left:1968.0px;width:1000px;text-align:center;top:1277.3px;font-size:23.8px;line-height:23.8px;color:#fff;font-weight:400;">ACTIVE</div>
<div style="position:absolute;left:2662.5px;top:1275.3px;width:6.6px;height:6.6px;background:#111827;border-radius:50%"></div>
<div style="position:absolute;left:2662.5px;top:1286.4px;width:6.6px;height:6.6px;background:#111827;border-radius:50%"></div>
<div style="position:absolute;left:2662.5px;top:1297.5px;width:6.6px;height:6.6px;background:#111827;border-radius:50%"></div>
<div style="position:absolute;left:656px;top:1361px;width:32px;height:32px;box-sizing:border-box;border:1.6px solid #6a6a6a;border-radius:7px;"></div>
<div class="t" style="left:759px;top:1368.9px;font-size:26px;line-height:26px;color:#1d2026;font-weight:400;-webkit-text-stroke:0.6px #1d2026;">128832561254638592</div>
<div class="t" style="left:1080.6px;top:1368.7px;font-size:26.2px;line-height:26.2px;color:#1d2026;font-weight:400;-webkit-text-stroke:0.6px #1d2026;">Davy</div>
<div class="t" style="left:1253px;top:1347.0px;font-size:26.6px;line-height:26.6px;color:#1d2026;font-weight:400;-webkit-text-stroke:0.6px #1d2026;">Customer</div>
<div class="t" style="left:1253px;top:1390.4px;font-size:26.6px;line-height:26.6px;color:#1d2026;font-weight:400;-webkit-text-stroke:0.6px #1d2026;">106</div>
<div class="t" style="left:1844px;top:1369.5px;font-size:25.3px;line-height:25.3px;color:#1f2937;font-weight:400;">Excellent</div>
<div style="position:absolute;left:2016px;top:1393px;width:14px;height:2px;background:#374151"></div>
<div class="t" style="left:2193px;top:1368.9px;font-size:26px;line-height:26px;color:#1f2937;font-weight:400;">04/11/2024</div>
<div style="position:absolute;left:2410px;top:1359px;width:116px;height:47px;background:#31a86c;border-radius:8px"></div>
<div class="t" style="left:1968.0px;width:1000px;text-align:center;top:1370.8px;font-size:23.8px;line-height:23.8px;color:#fff;font-weight:400;">ACTIVE</div>
<div style="position:absolute;left:2662.5px;top:1368.8px;width:6.6px;height:6.6px;background:#111827;border-radius:50%"></div>
<div style="position:absolute;left:2662.5px;top:1379.9px;width:6.6px;height:6.6px;background:#111827;border-radius:50%"></div>
<div style="position:absolute;left:2662.5px;top:1391.0px;width:6.6px;height:6.6px;background:#111827;border-radius:50%"></div>
<div style="position:absolute;left:614px;top:1432px;width:2124px;height:93px;background:#f7f8fa"></div>
<div style="position:absolute;left:656px;top:1454px;width:32px;height:32px;box-sizing:border-box;border:1.6px solid #6a6a6a;border-radius:7px;"></div>
<div class="t" style="left:759px;top:1462.4px;font-size:26px;line-height:26px;color:#1d2026;font-weight:400;-webkit-text-stroke:0.6px #1d2026;">131615386834828288</div>
<div class="t" style="left:1080.6px;top:1462.2px;font-size:26.2px;line-height:26.2px;color:#1d2026;font-weight:400;-webkit-text-stroke:0.6px #1d2026;">Davy</div>
<div class="t" style="left:1253px;top:1440.5px;font-size:26.6px;line-height:26.6px;color:#1d2026;font-weight:400;-webkit-text-stroke:0.6px #1d2026;">Customer</div>
<div class="t" style="left:1253px;top:1483.9px;font-size:26.6px;line-height:26.6px;color:#1d2026;font-weight:400;-webkit-text-stroke:0.6px #1d2026;">107</div>
<div class="t" style="left:1844px;top:1441.6px;font-size:25.3px;line-height:25.3px;color:#1f2937;font-weight:400;">Main</div>
<div class="t" style="left:1844px;top:1485.0px;font-size:25.3px;line-height:25.3px;color:#1f2937;font-weight:400;">Group</div>
<div style="position:absolute;left:2016px;top:1486px;width:14px;height:2px;background:#374151"></div>
<div class="t" style="left:2193px;top:1462.4px;font-size:26px;line-height:26px;color:#1f2937;font-weight:400;">12/11/2024</div>
<div style="position:absolute;left:2410px;top:1452px;width:141px;height:47px;background:#1fb0d6;border-radius:8px"></div>
<div class="t" style="left:1980.5px;width:1000px;text-align:center;top:1464.3px;font-size:23.8px;line-height:23.8px;color:#fff;font-weight:400;">CREATED</div>
<div style="position:absolute;left:2662.5px;top:1462.3px;width:6.6px;height:6.6px;background:#111827;border-radius:50%"></div>
<div style="position:absolute;left:2662.5px;top:1473.4px;width:6.6px;height:6.6px;background:#111827;border-radius:50%"></div>
<div style="position:absolute;left:2662.5px;top:1484.5px;width:6.6px;height:6.6px;background:#111827;border-radius:50%"></div>
<div style="position:absolute;left:656px;top:1548px;width:32px;height:32px;box-sizing:border-box;border:1.6px solid #6a6a6a;border-radius:7px;"></div>
<div class="t" style="left:759px;top:1555.9px;font-size:26px;line-height:26px;color:#1d2026;font-weight:400;-webkit-text-stroke:0.6px #1d2026;">133877210830158848</div>
<div class="t" style="left:1080.6px;top:1555.7px;font-size:26.2px;line-height:26.2px;color:#1d2026;font-weight:400;-webkit-text-stroke:0.6px #1d2026;">John</div>
<div class="t" style="left:1253px;top:1555.4px;font-size:26.6px;line-height:26.6px;color:#1d2026;font-weight:400;-webkit-text-stroke:0.6px #1d2026;">Doe</div>
<div class="t" style="left:1844px;top:1535.1px;font-size:25.3px;line-height:25.3px;color:#1f2937;font-weight:400;">Main</div>
<div class="t" style="left:1844px;top:1578.5px;font-size:25.3px;line-height:25.3px;color:#1f2937;font-weight:400;">Group</div>
<div style="position:absolute;left:2016px;top:1580px;width:14px;height:2px;background:#374151"></div>
<div class="t" style="left:2193px;top:1555.9px;font-size:26px;line-height:26px;color:#1f2937;font-weight:400;">18/11/2024</div>
<div style="position:absolute;left:2410px;top:1546px;width:141px;height:47px;background:#1fb0d6;border-radius:8px"></div>
<div class="t" style="left:1980.5px;width:1000px;text-align:center;top:1557.8px;font-size:23.8px;line-height:23.8px;color:#fff;font-weight:400;">CREATED</div>
<div style="position:absolute;left:2662.5px;top:1555.8px;width:6.6px;height:6.6px;background:#111827;border-radius:50%"></div>
<div style="position:absolute;left:2662.5px;top:1566.9px;width:6.6px;height:6.6px;background:#111827;border-radius:50%"></div>
<div style="position:absolute;left:2662.5px;top:1578.0px;width:6.6px;height:6.6px;background:#111827;border-radius:50%"></div>
<div style="position:absolute;left:614px;top:1618px;width:2124px;height:94px;background:#f7f8fa"></div>
<div style="position:absolute;left:656px;top:1642px;width:32px;height:32px;box-sizing:border-box;border:1.6px solid #6a6a6a;border-radius:7px;"></div>
<div class="t" style="left:759px;top:1649.4px;font-size:26px;line-height:26px;color:#1d2026;font-weight:400;-webkit-text-stroke:0.6px #1d2026;">133877256774564864</div>
<div class="t" style="left:1080.6px;top:1649.2px;font-size:26.2px;line-height:26.2px;color:#1d2026;font-weight:400;-webkit-text-stroke:0.6px #1d2026;">Brittany</div>
<div class="t" style="left:1253px;top:1648.9px;font-size:26.6px;line-height:26.6px;color:#1d2026;font-weight:400;-webkit-text-stroke:0.6px #1d2026;">Edwards</div>
<div class="t" style="left:1844px;top:1628.6px;font-size:25.3px;line-height:25.3px;color:#1f2937;font-weight:400;">Main</div>
<div class="t" style="left:1844px;top:1672.0px;font-size:25.3px;line-height:25.3px;color:#1f2937;font-weight:400;">Group</div>
<div style="position:absolute;left:2016px;top:1674px;width:14px;height:2px;background:#374151"></div>
<div class="t" style="left:2193px;top:1649.4px;font-size:26px;line-height:26px;color:#1f2937;font-weight:400;">18/11/2024</div>
<div style="position:absolute;left:2410px;top:1640px;width:141px;height:47px;background:#1fb0d6;border-radius:8px"></div>
<div class="t" style="left:1980.5px;width:1000px;text-align:center;top:1651.3px;font-size:23.8px;line-height:23.8px;color:#fff;font-weight:400;">CREATED</div>
<div style="position:absolute;left:2662.5px;top:1649.3px;width:6.6px;height:6.6px;background:#111827;border-radius:50%"></div>
<div style="position:absolute;left:2662.5px;top:1660.4px;width:6.6px;height:6.6px;background:#111827;border-radius:50%"></div>
<div style="position:absolute;left:2662.5px;top:1671.5px;width:6.6px;height:6.6px;background:#111827;border-radius:50%"></div>
<div style="position:absolute;left:1404px;top:796px;width:398px;height:884px;background:#d9d9d9;filter:blur(1.2px)"></div>
<div class="t" style="left:643px;top:1805.0px;font-size:22.4px;line-height:22.4px;color:#45484f;font-weight:400;">11 – 20 of 52</div>
<div class="t" style="left:2265px;top:1804.7px;font-size:22.7px;line-height:22.7px;color:#4a4d55;font-weight:400;">Items per page:</div>
<div class="t" style="left:2446px;top:1804.7px;font-size:22.7px;line-height:22.7px;color:#4b5563;font-weight:400;">10</div>
<svg style="position:absolute;left:2478px;top:1812px" width="22" height="12" viewBox="0 0 22 12" fill="none"><path d="M2 1 L20 1 L11 11 Z" fill="#566a8a"/></svg>
<div style="position:absolute;left:2553px;top:1797px;width:45px;height:38px;box-sizing:border-box;border:2px solid #cdd2da;border-radius:9px;background:#f3f6fa"></div>
<svg style="position:absolute;left:2566px;top:1806px" width="18" height="20" viewBox="0 0 18 20" fill="none"><path d="M10.5 6 L6.5 10 L10.5 14" stroke="#4a4d55" stroke-width="1.9" stroke-linecap="round" stroke-linejoin="round"/></svg>
<div class="t" style="left:2615px;top:1804.7px;font-size:22.7px;line-height:22.7px;color:#1f2937;font-weight:400;">2/6</div>
<div style="position:absolute;left:2665px;top:1797px;width:46px;height:38px;box-sizing:border-box;border:2px solid #cdd2da;border-radius:9px;background:#f3f6fa"></div>
<svg style="position:absolute;left:2679px;top:1806px" width="18" height="20" viewBox="0 0 18 20" fill="none"><path d="M5.5 6 L9.5 10 L5.5 14" stroke="#4a4d55" stroke-width="1.9" stroke-linecap="round" stroke-linejoin="round"/></svg>
<div style="position:absolute;left:1039px;top:1340px;width:314px;height:43px;background:#b6effb;border-radius:5px"></div>
<div class="t" style="left:1047px;top:1345.8px;font-size:29.7px;line-height:29.7px;color:#11697e;font-weight:400;">Click to view customer</div>
<svg style="position:absolute;left:1110px;top:1180px" width="160" height="150" viewBox="1110 1180 160 150">
<defs><linearGradient id="hg" x1="0" y1="0" x2="1" y2="1"><stop offset="0.3" stop-color="#dafcff"/><stop offset="1" stop-color="#5fd0f7"/></linearGradient>
<filter id="glow" x="-50%" y="-50%" width="200%" height="200%"><feGaussianBlur stdDeviation="7"/></filter></defs>
<path d="M1151.5 1210 L1159.8 1213.2 L1173.9 1233.1 L1178 1230.6 L1188.8 1227.3 L1199.6 1223.2 L1207 1221.5 L1212.9 1224.8 L1232.8 1254.7 L1233.6 1277 L1202.9 1299.5 L1196.3 1295.3 L1173.9 1289.5 L1159.8 1269.6 L1160.6 1260.5 L1164.8 1258 L1142.4 1221.5 L1144.9 1212.4 Z" fill="#3fb4f7" opacity="0.75" filter="url(#glow)" transform="translate(2,3)"/>
<path d="M1151.5 1210 L1159.8 1213.2 L1173.9 1233.1 L1178 1230.6 L1188.8 1227.3 L1199.6 1223.2 L1207 1221.5 L1212.9 1224.8 L1232.8 1254.7 L1233.6 1277 L1202.9 1299.5 L1196.3 1295.3 L1173.9 1289.5 L1159.8 1269.6 L1160.6 1260.5 L1164.8 1258 L1142.4 1221.5 L1144.9 1212.4 Z" fill="url(#hg)" stroke="#0b1220" stroke-width="3.2" stroke-linejoin="round"/>
<path d="M1173.9 1233.1 L1179.5 1246 M1188.8 1227.3 L1192 1240 M1199.6 1223.2 L1202 1234 M1164.8 1258 L1174 1268" stroke="#0b1220" stroke-width="2" stroke-linecap="round"/>
<path d="M1189 1260 L1197 1254 L1212 1278" stroke="#0a8cf5" stroke-width="5.5" stroke-linejoin="miter" fill="none"/>
</svg>
</body></html>
